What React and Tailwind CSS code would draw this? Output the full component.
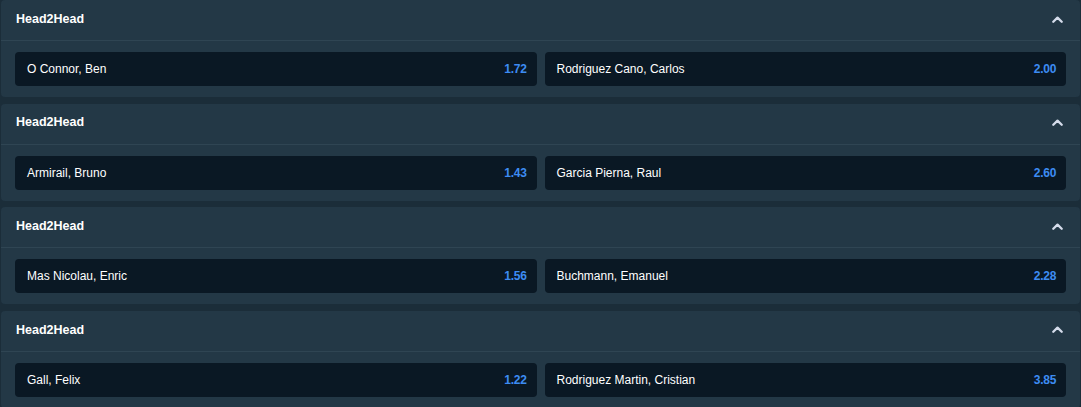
import React from "react";

const markets = [
  { home: { name: "O Connor, Ben", odds: "1.72" }, away: { name: "Rodriguez Cano, Carlos", odds: "2.00" } },
  { home: { name: "Armirail, Bruno", odds: "1.43" }, away: { name: "Garcia Pierna, Raul", odds: "2.60" } },
  { home: { name: "Mas Nicolau, Enric", odds: "1.56" }, away: { name: "Buchmann, Emanuel", odds: "2.28" } },
  { home: { name: "Gall, Felix", odds: "1.22" }, away: { name: "Rodriguez Martin, Cristian", odds: "3.85" } },
];

function ChevronUp() {
  return (
    <svg width="11" height="7" viewBox="0 0 11 7" fill="none" className="text-[#d5dceb]">
      <path d="M1.3 5.7 5.5 1.6l4.2 4.1" stroke="currentColor" strokeWidth="2.3" strokeLinecap="round" strokeLinejoin="round" />
    </svg>
  );
}

function OddsButton({ name, odds }) {
  return (
    <button className="flex h-[34px] flex-1 items-center justify-between rounded bg-[#0a1824] pl-3 pr-[10px] text-left">
      <span className="text-[12px] text-white">{name}</span>
      <span className="text-[12px] font-bold tracking-[-0.3px] text-[#3d8cf2]">{odds}</span>
    </button>
  );
}

function MarketCard({ home, away }) {
  return (
    <div className="rounded bg-[#233846]">
      <div className="flex h-[41px] items-center justify-between border-b border-[#2f4553] pb-[2px] pl-[15px] pr-[17px]">
        <span className="text-[12.5px] font-bold text-white">Head2Head</span>
        <ChevronUp />
      </div>
      <div className="flex gap-2 px-[14px] pt-[11px] pb-[11px]">
        <OddsButton {...home} />
        <OddsButton {...away} />
      </div>
    </div>
  );
}

export default function App() {
  return (
    <div
      className="flex min-h-screen flex-col gap-[6.67px] bg-[#1b2d39] px-px"
      style={{ fontFamily: '"Liberation Sans", Arial, sans-serif' }}
    >
      {markets.map((m, i) => (
        <MarketCard key={i} {...m} />
      ))}
    </div>
  );
}
